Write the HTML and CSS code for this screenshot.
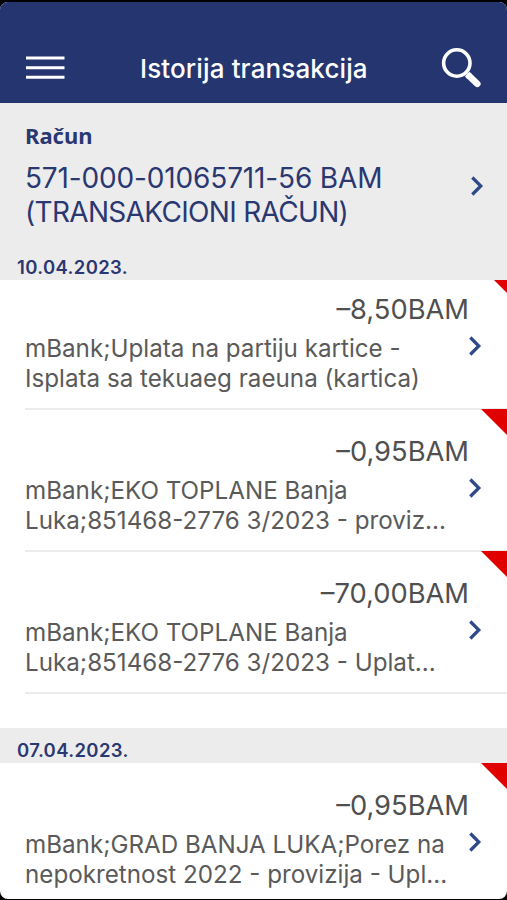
FILE: index.html
```html
<!DOCTYPE html>
<html lang="bs">
<head>
    <meta charset="UTF-8">
    <meta name="viewport" content="width=device-width, initial-scale=1.0">
    <title>Istorija transakcija</title>
    <link rel="stylesheet" href="styles.css">
</head>
<body>
    <div class="app">
        <header class="header">
            <svg class="menu-icon" viewBox="0 0 40 26" fill="none" stroke="#fff" stroke-width="3">
                <path d="M1 3.1h38.5M1 12.7h38.5M1 22.2h38.5"/>
            </svg>
            <h1>Istorija transakcija</h1>
            <svg class="search-icon" viewBox="0 0 42 42" fill="none" stroke="#fff">
                <circle cx="16.8" cy="17" r="13.2" stroke-width="3.6"/>
                <path d="M27.2 28.2l2.5 2.4" stroke-width="6.6"/>
                <path d="M29.3 30.2l8 7.6" stroke-width="6.6" stroke-linecap="round"/>
            </svg>
        </header>

        <section class="account">
            <div class="account-info">
                <h2>Račun</h2>
                <p class="account-number">571-000-01065711-56 BAM</p>
                <p class="account-type">(TRANSAKCIONI RAČUN)</p>
            </div>
            <svg class="chevron" viewBox="0 0 14 20"><path d="M2.3 1.5L10.8 10l-8.5 8.5"/></svg>
        </section>

        <main class="history">
            <h3 class="date">10.04.2023.</h3>
            <div class="group first">
                <div class="transaction">
                    <div class="amount">–8,50BAM</div>
                    <div class="details">
                        <p>mBank;Uplata na partiju kartice -<br>Isplata sa tekuaeg raeuna (kartica)</p>
                        <svg class="chevron" viewBox="0 0 14 20"><path d="M2.3 1.5L10.8 10l-8.5 8.5"/></svg>
                    </div>
                </div>
                <div class="transaction">
                    <div class="amount">–0,95BAM</div>
                    <div class="details">
                        <p>mBank;EKO TOPLANE Banja<br>Luka;851468-2776 3/2023 - proviz...</p>
                        <svg class="chevron" viewBox="0 0 14 20"><path d="M2.3 1.5L10.8 10l-8.5 8.5"/></svg>
                    </div>
                </div>
                <div class="transaction">
                    <div class="amount">–70,00BAM</div>
                    <div class="details">
                        <p>mBank;EKO TOPLANE Banja<br>Luka;851468-2776 3/2023 - Uplat...</p>
                        <svg class="chevron" viewBox="0 0 14 20"><path d="M2.3 1.5L10.8 10l-8.5 8.5"/></svg>
                    </div>
                </div>
            </div>

            <h3 class="date">07.04.2023.</h3>
            <div class="group">
                <div class="transaction">
                    <div class="amount">–0,95BAM</div>
                    <div class="details">
                        <p>mBank;GRAD BANJA LUKA;Porez na<br>nepokretnost 2022 - provizija - Upl...</p>
                        <svg class="chevron" viewBox="0 0 14 20"><path d="M2.3 1.5L10.8 10l-8.5 8.5"/></svg>
                    </div>
                </div>
            </div>
        </main>
    </div>
</body>
</html>
```
FILE: styles.css
```css
* {
    margin: 0;
    padding: 0;
    box-sizing: border-box;
}

body {
    font-family: Inter, "Liberation Sans", sans-serif;
    background: #000;
    height: 900px;
    padding: 2px 0 1px;
    overflow: hidden;
}

.app {
    display: flex;
    flex-direction: column;
    height: 897px;
    background: white;
    border-radius: 8px;
    overflow: hidden;
}

.header {
    display: flex;
    align-items: flex-start;
    flex-shrink: 0;
    height: 101px;
    padding: 0 25px;
    background: #24356f;
}

.menu-icon {
    width: 40px;
    height: 26px;
    margin-top: 53px;
}

.header h1 {
    flex: 1;
    margin-top: 51px;
    padding-left: 75px;
    color: white;
    font-size: 26px;
    font-weight: 500;
    line-height: 32px;
    letter-spacing: 0.12px;
    white-space: nowrap;
}

.search-icon {
    width: 42px;
    height: 42px;
    margin-top: 44px;
}

.account {
    display: flex;
    justify-content: space-between;
    flex-shrink: 0;
    height: 153px;
    padding: 17px 23px 0 25px;
    background: #edecec;
    color: #2a3872;
}

.account h2 {
    margin-bottom: 11px;
    font-family: "Noto Sans", sans-serif;
    font-size: 22px;
    line-height: 30px;
}

.account p {
    font-size: 28px;
    line-height: 34px;
    letter-spacing: -0.15px;
    white-space: nowrap;
}

.account .account-type {
    letter-spacing: -0.68px;
}

.account .chevron {
    margin-top: 56px;
}

.chevron {
    flex-shrink: 0;
    width: 14px;
    height: 20px;
    fill: none;
    stroke: #2d4a88;
    stroke-width: 3.2;
}

.date {
    height: 35px;
    padding: 9px 17px 0;
    background: #edecec;
    color: #2a3872;
    font-size: 18.5px;
    font-weight: 600;
    line-height: 26px;
    letter-spacing: 0.35px;
}

.history .date:first-child {
    height: 24px;
    padding-top: 0;
    line-height: 23px;
}

.group {
    overflow: hidden;
}

.group.first {
    padding-bottom: 35px;
}

/* the list is scrolled a little under its date header */
.first .transaction:first-child {
    margin-top: -13px;
}

.transaction {
    position: relative;
    height: 142px;
    padding: 25px 25px 0;
}

/* divider under each row */
.transaction::before {
    content: "";
    position: absolute;
    left: 25px;
    right: 0;
    bottom: -1px;
    height: 2px;
    background: #ececec;
}

/* red corner for outgoing payments */
.transaction::after {
    content: "";
    position: absolute;
    top: 0;
    right: 0;
    width: 26px;
    height: 26px;
    background: #e00000;
    clip-path: polygon(0 0, 100% 0, 100% 100%);
}

.amount {
    padding-right: 13px;
    color: #4f4f4f;
    font-size: 27.3px;
    line-height: 36px;
    text-align: right;
}

.details {
    display: flex;
    justify-content: space-between;
    margin-top: 6px;
    color: #5a5a5a;
    font-size: 24.2px;
    line-height: 30px;
}

.details p {
    white-space: nowrap;
}

.details .chevron {
    margin-top: 2px;
}
```
